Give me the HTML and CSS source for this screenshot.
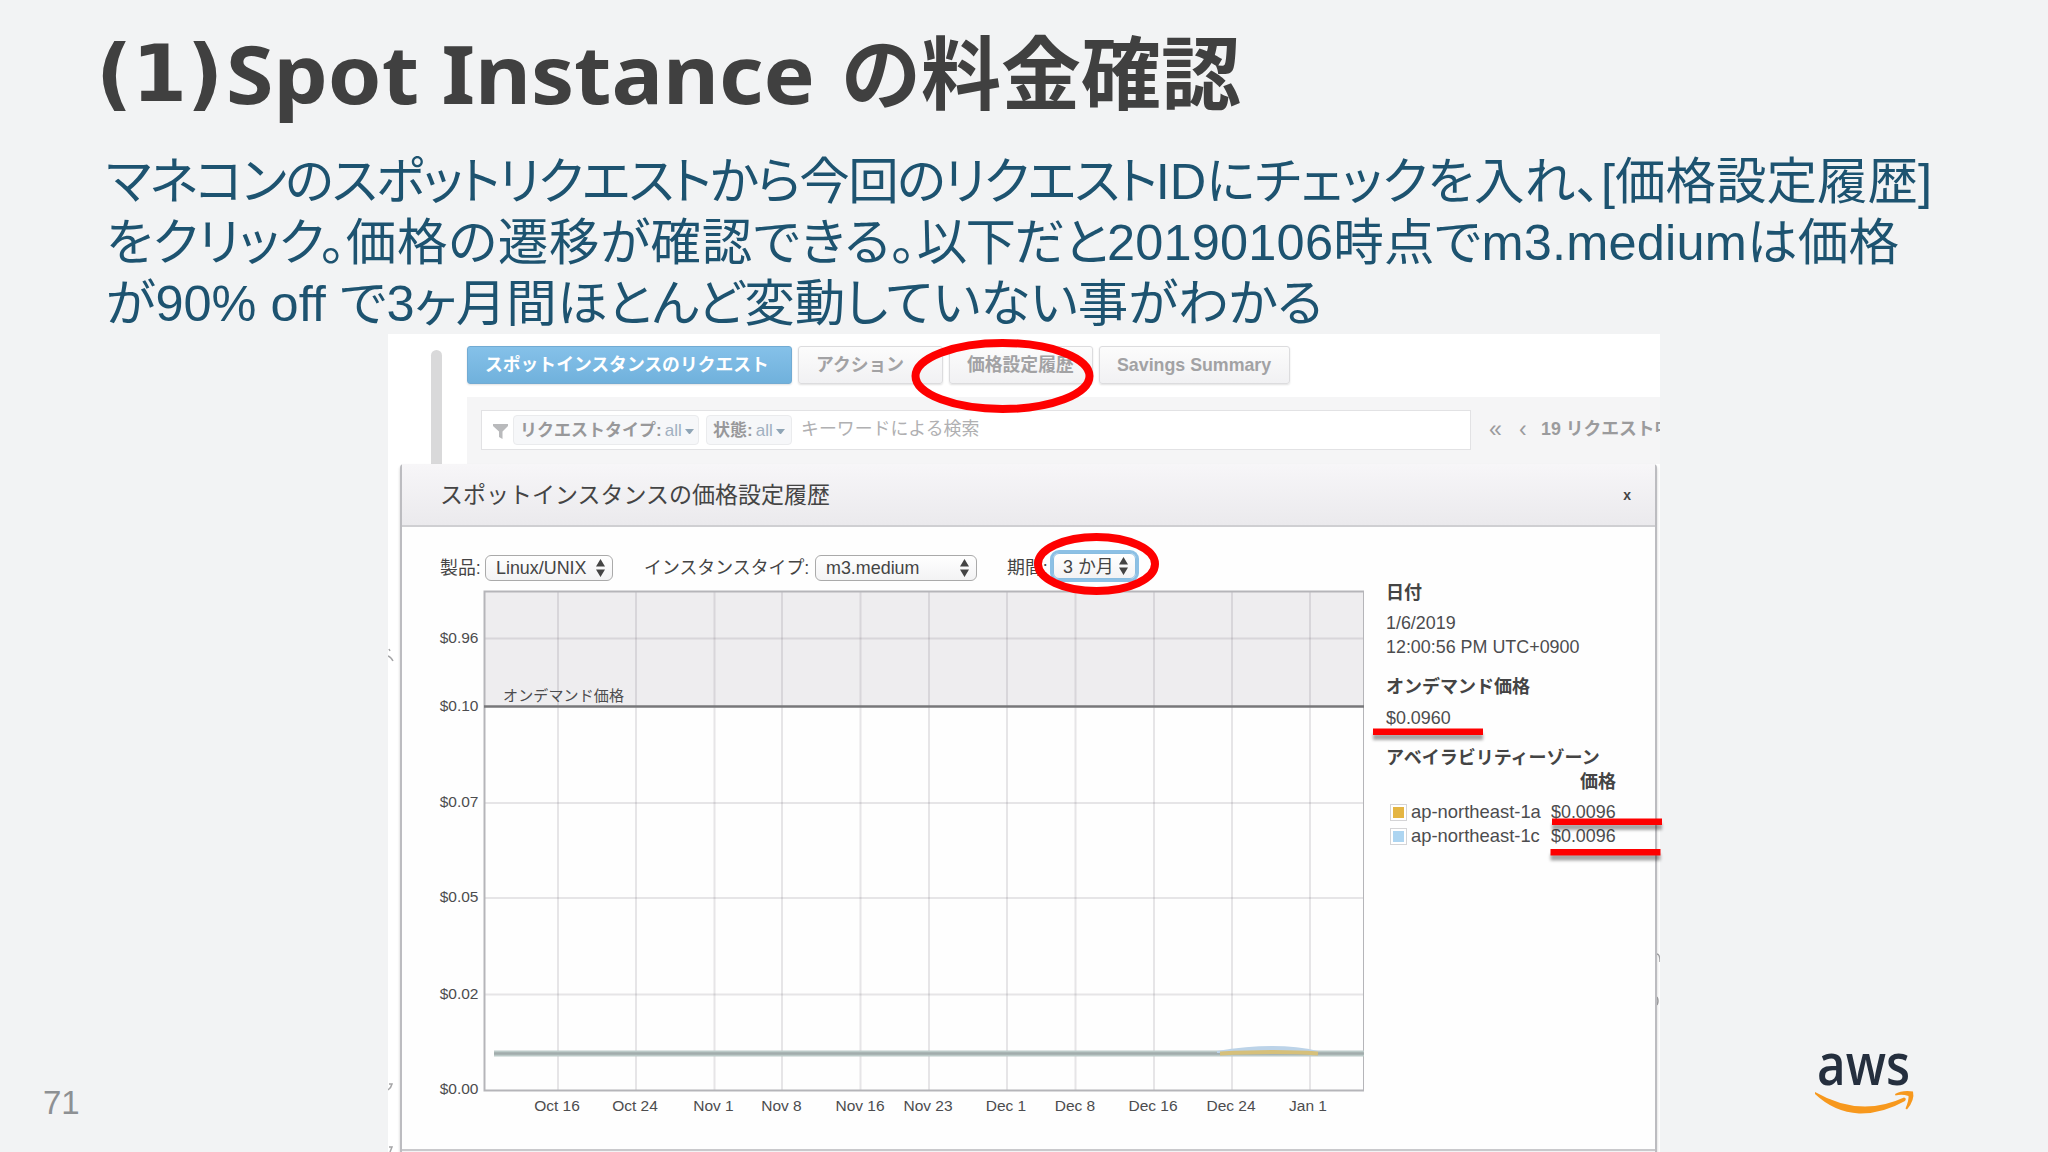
FILE: index.html
```html
<!DOCTYPE html>
<html lang="ja">
<head>
    <meta charset="UTF-8">
    <meta name="viewport" content="width=device-width, initial-scale=1.0">
    <title>(1)Spot Instance の料金確認</title>
    <link rel="stylesheet" href="styles.css">
</head>
<body>
    <div class="slide">
        <h1><span class="title-number">(1)</span><span class="title-en">Spot Instance</span><span class="title-ja">の料金確認</span></h1>
        <p class="lead">
            <span class="line"><span class="tight">マネコンのスポットリクエストから今回のリクエスト</span><span>IDにチェックを入れ、</span><span>[価格設定履歴]</span></span>
            <span class="line"><span>をクリック。</span><span class="loose">価格の遷移が確認できる。</span><span class="tight">以下だと</span><span class="wide">20190106時点でm3.mediumは価格</span></span>
            <span class="line"><span>が90% off で</span><span>3ヶ月間ほとんど変動していない事がわかる</span></span>
        </p>

        <div class="stage">
            <div class="page-number">71</div>

            <div class="console">
                <div class="toolbar">
                    <div class="scrollbar"></div>
                    <div class="toolbar-main">
                        <div class="buttons">
                            <div class="btn btn-primary">スポットインスタンスのリクエスト</div>
                            <div class="btn btn-action">アクション</div>
                            <div class="btn btn-history">価格設定履歴</div>
                            <div class="btn btn-savings">Savings Summary</div>
                        </div>
                        <div class="filter-bar">
                            <div class="search">
                                <svg class="funnel" width="16" height="16" viewBox="0 0 16 16"><path d="M0 0H15V2L9.500 7.500V15L6 13V7.500L0 2Z" fill="#b9babc"/></svg>
                                <div class="tag tag-type"><b>リクエストタイプ:</b> <span>all</span><i class="caret"></i></div>
                                <div class="tag tag-state"><b>状態:</b> <span>all</span><i class="caret"></i></div>
                                <div class="placeholder">キーワードによる検索</div>
                            </div>
                            <div class="pager"><span class="first">«</span><span class="prev">‹</span><b>19 リクエスト中</b></div>
                        </div>
                    </div>
                </div>

                <!-- slivers of the page that stick out behind the dialog -->
                <svg class="behind" width="1272" height="818" viewBox="388 334 1272 818">
                    <path d="M389 649L390 651M388 656Q391 657 393 661M389 1084H392Q391 1088 388 1090M389 1147H392L390 1152M1657 954Q1660 954 1660 962M1657 997Q1659 1001 1657 1005"/>
                </svg>

                <div class="modal">
                    <div class="modal-header">
                        <div class="modal-title">スポットインスタンスの価格設定履歴</div>
                        <div class="close">x</div>
                    </div>
                    <div class="modal-body">
                        <div class="controls">
                            <label class="label-product">製品:</label>
                            <div class="select select-product"><span>Linux/UNIX</span><svg width="9" height="18" viewBox="0 0 9 18"><path d="M0 7.500L4.500 0L9 7.500ZM0 10.500L4.500 18L9 10.500Z"/></svg></div>
                            <label class="label-type">インスタンスタイプ:</label>
                            <div class="select select-type"><span>m3.medium</span><svg width="9" height="18" viewBox="0 0 9 18"><path d="M0 7.500L4.500 0L9 7.500ZM0 10.500L4.500 18L9 10.500Z"/></svg></div>
                            <label class="label-period">期間:</label>
                            <div class="select select-period"><span>3 か月</span><svg width="9" height="18" viewBox="0 0 9 18"><path d="M0 7.500L4.500 0L9 7.500ZM0 10.500L4.500 18L9 10.500Z"/></svg></div>
                        </div>
                        <div class="content">
                            <svg class="chart" width="930" height="560" viewBox="434 586 930 560">
                                <rect x="484" y="591.500" width="880" height="115" fill="#eeedef"/>
                                <g class="grid">
                                    <path d="M485 638.500H1363M485 803H1363M485 898H1363M485 994.500H1363"/>
                                    <path d="M558 592V1090M636 592V1090M714.500 592V1090M782 592V1090M860.500 592V1090M929 592V1090M1007 592V1090M1075.500 592V1090M1154 592V1090M1232 592V1090M1310 592V1090"/>
                                </g>
                                <rect class="frame" x="484.500" y="591.500" width="879.500" height="499"/>
                                <path class="on-demand" d="M484 706.500H1364"/>
                                <text class="od-label" x="503" y="701" textLength="121">オンデマンド価格</text>
                                <path d="M494 1053.500H1364" stroke="#bccac8" stroke-width="6"/>
                                <path d="M494 1053.500H1364" stroke="#a2acac" stroke-width="2.500"/>
                                <path d="M1217 1051Q1277 1041 1318 1051L1318 1053H1217Z" fill="#bcd3e8"/>
                                <path d="M1220 1053.500Q1278 1050.500 1318 1053.500" fill="none" stroke="#d6c07a" stroke-width="4"/>
                                <g class="y-labels">
                                    <text x="478.500" y="642.500">$0.96</text>
                                    <text x="478.500" y="711">$0.10</text>
                                    <text x="478.500" y="806.500">$0.07</text>
                                    <text x="478.500" y="902">$0.05</text>
                                    <text x="478.500" y="998.500">$0.02</text>
                                    <text x="478.500" y="1093.500">$0.00</text>
                                </g>
                                <g class="x-labels">
                                    <text x="557" y="1111">Oct 16</text>
                                    <text x="635" y="1111">Oct 24</text>
                                    <text x="713.500" y="1111">Nov 1</text>
                                    <text x="781.500" y="1111">Nov 8</text>
                                    <text x="860" y="1111">Nov 16</text>
                                    <text x="928" y="1111">Nov 23</text>
                                    <text x="1006" y="1111">Dec 1</text>
                                    <text x="1075" y="1111">Dec 8</text>
                                    <text x="1153" y="1111">Dec 16</text>
                                    <text x="1231" y="1111">Dec 24</text>
                                    <text x="1308" y="1111">Jan 1</text>
                                </g>
                            </svg>
                            <div class="details">
                                <div class="heading">日付</div>
                                <div class="date">1/6/2019<br>12:00:56 PM UTC+0900</div>
                                <div class="heading">オンデマンド価格</div>
                                <div class="od-price">$0.0960</div>
                                <div class="heading">アベイラビリティーゾーン</div>
                                <div class="heading price-heading">価格</div>
                                <div class="zone"><i class="swatch swatch-a"></i><span>ap-northeast-1a</span><span class="price">$0.0096</span></div>
                                <div class="zone"><i class="swatch swatch-c"></i><span>ap-northeast-1c</span><span class="price">$0.0096</span></div>
                            </div>
                        </div>
                    </div>
                    <div class="modal-footer"></div>
                </div>
            </div>

            <div class="logo">
                <svg width="104" height="84" viewBox="1812 1034 104 84">
                    <text class="logo-text" x="1817" y="1084.500" textLength="93" lengthAdjust="spacingAndGlyphs">aws</text>
                    <path d="M1815 1092Q1860 1118 1904 1097.500Q1907 1098 1905 1101Q1882 1114 1859 1113.500Q1834 1112 1815 1094Z" fill="#f7981d"/>
                    <path d="M1895 1094Q1902 1090 1913 1091.500Q1915 1100 1907 1109.500L1905.500 1108.500Q1909 1100 1908.500 1096Q1902 1094 1895.500 1095.500Z" fill="#f7981d"/>
                </svg>
            </div>
        </div>

        <!-- hand-drawn emphasis over the console capture -->
        <svg class="marks" width="2048" height="1152" viewBox="0 0 2048 1152">
            <g fill="none" stroke="#fe0000" stroke-width="8">
                <ellipse cx="1002.500" cy="376" rx="87" ry="33"/>
                <ellipse cx="1096.500" cy="564" rx="58.500" ry="27"/>
            </g>
            <g class="underlines" fill="#fe0000">
                <rect x="1373" y="728.500" width="110" height="6.500"/>
                <rect x="1552" y="818.500" width="110" height="6.500"/>
                <rect x="1550.500" y="849" width="110" height="6.500"/>
            </g>
        </svg>
    </div>
</body>
</html>
```

FILE: styles.css
```css
* {
    box-sizing: border-box;
}

body {
    margin: 0;
    background-color: #f2f3f4;
    font-family: "Liberation Sans", "Noto Sans CJK JP", sans-serif;
}

.slide {
    position: relative;
    width: 2048px;
    height: 1152px;
    overflow: hidden;
}

h1 {
    display: flex;
    margin: 0;
    padding-left: 96px;
    height: 151px;
    line-height: 145px;
    font-family: "Noto Sans", "Noto Sans CJK JP", sans-serif;
    font-size: 81px;
    font-weight: bold;
    color: #404040;
    white-space: nowrap;
}

.title-number {
    width: 130px;
    font-family: "DejaVu Sans", sans-serif;
    font-size: 79px;
    line-height: 149px;
}

.title-en {
    width: 615px;
    transform: scaleX(1.063);
    transform-origin: left;
}

.title-ja {
    font-family: "Noto Sans CJK JP", sans-serif;
    font-size: 80px;
    line-height: 137px;
}

.lead {
    margin: 0;
    padding-left: 106px;
    height: 183px;
    font-size: 50.5px;
    line-height: 61px;
    color: #1d5370;
    font-feature-settings: "palt";
}

.line {
    display: flex;
    white-space: nowrap;
}

.tight {
    letter-spacing: -1.6px;
}

.wide {
    letter-spacing: 0.2px;
}

.loose {
    letter-spacing: 0.8px;
}

.stage {
    display: grid;
    grid-template-columns: 388px 1272px 1fr;
    height: 818px;
}

.page-number {
    align-self: end;
    padding: 0 0 30px 43px;
    font-size: 33px;
    line-height: 38px;
    color: #8d9093;
}

.console {
    position: relative;
    overflow: hidden;
    background-color: #fff;
}

.toolbar {
    display: flex;
    height: 130px;
    padding-left: 43px;
}

.scrollbar {
    flex: none;
    width: 11px;
    height: 124px;
    margin: 16px 25px 0 0;
    border-radius: 6px;
    background-color: #d9d9da;
}

.toolbar-main {
    flex: 1;
    min-width: 0;
}

.buttons {
    display: flex;
    gap: 6px;
    height: 63px;
    padding-top: 12px;
}

.btn {
    height: 38px;
    padding-left: 17px;
    border: 1px solid #dcdcde;
    border-radius: 3px;
    background: linear-gradient(#fcfcfc, #f1f1f3);
    box-shadow: 0 1px 2px rgba(0, 0, 0, 0.12);
    font-size: 17.8px;
    font-weight: bold;
    line-height: 37px;
    color: #a2a2a4;
    white-space: nowrap;
}

.btn-primary {
    width: 325px;
    border-color: #72abd3;
    background: linear-gradient(#85c1e9, #70b1dc);
    color: #fff;
}

.btn-action {
    width: 145px;
}

.btn-history {
    width: 144px;
}

.btn-savings {
    width: 191px;
}

.filter-bar {
    display: flex;
    height: 67px;
    padding: 13px 0 0 14px;
    background-color: #f5f5f6;
    white-space: nowrap;
}

.search {
    display: flex;
    flex: none;
    width: 990px;
    height: 40px;
    padding: 4px 0 0 11px;
    border: 1px solid #e2e2e4;
    background-color: #fff;
    font-size: 17px;
    line-height: 29px;
    color: #98989a;
}

.funnel {
    margin: 9px 4px 0 0;
}

.tag {
    display: flex;
    height: 30px;
    padding-left: 6px;
    border: 1px solid #eaebed;
    border-radius: 4px;
    background-color: #f6f7f9;
}

.tag span {
    margin-left: 3px;
    color: #a0afc0;
}

.tag-type {
    width: 186px;
    margin-right: 7px;
}

.tag-state {
    width: 86px;
    margin-right: 9px;
}

.caret {
    width: 9px;
    margin: 13px 0 0 3px;
    height: 0;
    border-left: 4.5px solid transparent;
    border-right: 4.5px solid transparent;
    border-top: 5px solid #8fa5b6;
}

.placeholder {
    font-size: 17.9px;
    color: #b0b0b2;
}

.pager {
    display: flex;
    padding-left: 18px;
    font-size: 17.8px;
    line-height: 38px;
    color: #9b9b9d;
}

.first,
.prev {
    width: 30px;
    font-size: 23px;
}

.prev {
    width: 22px;
}

.behind {
    position: absolute;
    left: 0;
    top: 0;
    fill: none;
    stroke: #a5a5a7;
    stroke-width: 1.5;
}

.modal {
    position: relative;
    width: 1257px;
    height: 688px;
    margin-left: 12px;
    border: 2px solid #bcbcc0;
    border-top: 0;
    border-bottom: 0;
    border-radius: 4px 4px 0 0;
    background-color: #fefefe;
    box-shadow: 0 2px 3px rgba(0, 0, 0, 0.2);
}

.modal-header {
    display: flex;
    justify-content: space-between;
    height: 63px;
    padding: 0 24px 0 38px;
    border-bottom: 2px solid #cfcfd2;
    background: linear-gradient(#f7f6f8, #ebeaed);
    line-height: 62px;
    color: #444;
}

.modal-title {
    font-size: 23px;
}

.close {
    font-size: 14px;
    font-weight: bold;
}

.modal-body {
    height: 622px;
    padding-left: 32px;
}

.controls {
    display: flex;
    height: 59px;
    padding: 28px 0 0 6px;
    font-size: 17.9px;
    line-height: 26px;
    color: #444;
    white-space: nowrap;
}

.label-product {
    width: 45px;
}

.label-type {
    width: 171px;
}

.label-period {
    width: 46px;
}

.select {
    display: flex;
    justify-content: space-between;
    height: 26px;
    padding: 3px 7px 0 10px;
    border: 1px solid #aaa;
    border-radius: 6px;
    background: linear-gradient(#fff, #f3f3f4);
    line-height: 18px;
    fill: #444;
}

.select-product {
    width: 128px;
    margin-right: 31px;
}

.select-type {
    width: 162px;
    margin-right: 30px;
}

.select-period {
    width: 83px;
    margin-top: -2px;
    padding-left: 9px;
    line-height: 20px;
    border: 1px solid #8abde0;
    box-shadow: 0 0 0 3px #8cc0e5;
}

.content {
    display: flex;
}

.chart {
    flex: none;
    font-size: 15.5px;
    fill: #4c4c4e;
}

.grid {
    fill: none;
    stroke: rgba(85, 80, 95, 0.14);
    stroke-width: 2;
}

.frame {
    fill: none;
    stroke: #b5b5b9;
    stroke-width: 2;
}

.on-demand {
    stroke: #77777a;
    stroke-width: 2.5;
}

.od-label {
    font-size: 15px;
}

.y-labels {
    text-anchor: end;
}

.x-labels {
    text-anchor: middle;
}

.details {
    padding-left: 22px;
    width: 252px;
    font-size: 17.9px;
    line-height: 24px;
    color: #4c4c4e;
    white-space: nowrap;
}

.heading {
    font-size: 18px;
    font-weight: bold;
    color: #444;
}

.details > .heading:first-child {
    margin-top: -5px;
}

.date {
    margin: 6px 0 16px;
}

.od-price {
    margin: 7px 0 16px;
}

.price-heading {
    width: 230px;
    text-align: right;
    margin-bottom: 6px;
}

.zone {
    display: flex;
    align-items: center;
    height: 24px;
    padding-left: 4px;
}

.zone span {
    flex: none;
    width: 140px;
    font-size: 18.4px;
}

.zone .price {
    width: 66px;
    font-size: 17.9px;
}

.swatch {
    flex: none;
    width: 17px;
    height: 17px;
    margin-right: 4px;
    border: 1px solid #d4d4d6;
    box-shadow: inset 0 0 0 2px #fff;
}

.swatch-a {
    background-color: #e4b543;
}

.swatch-c {
    background-color: #add5f1;
}

.modal-footer {
    height: 3px;
    border-top: 2px solid #c9c9cc;
    background-color: #f3f3f5;
}

.logo {
    align-self: end;
    height: 118px;
    padding-left: 152px;
}

.logo-text {
    font-family: "Open Sans", sans-serif;
    font-size: 58px;
    font-weight: 600;
    fill: #252f3e;
}

.marks {
    position: absolute;
    left: 0;
    top: 0;
}

.underlines {
    filter: drop-shadow(0 5px 1.5px rgba(0, 0, 0, 0.35));
}
```
